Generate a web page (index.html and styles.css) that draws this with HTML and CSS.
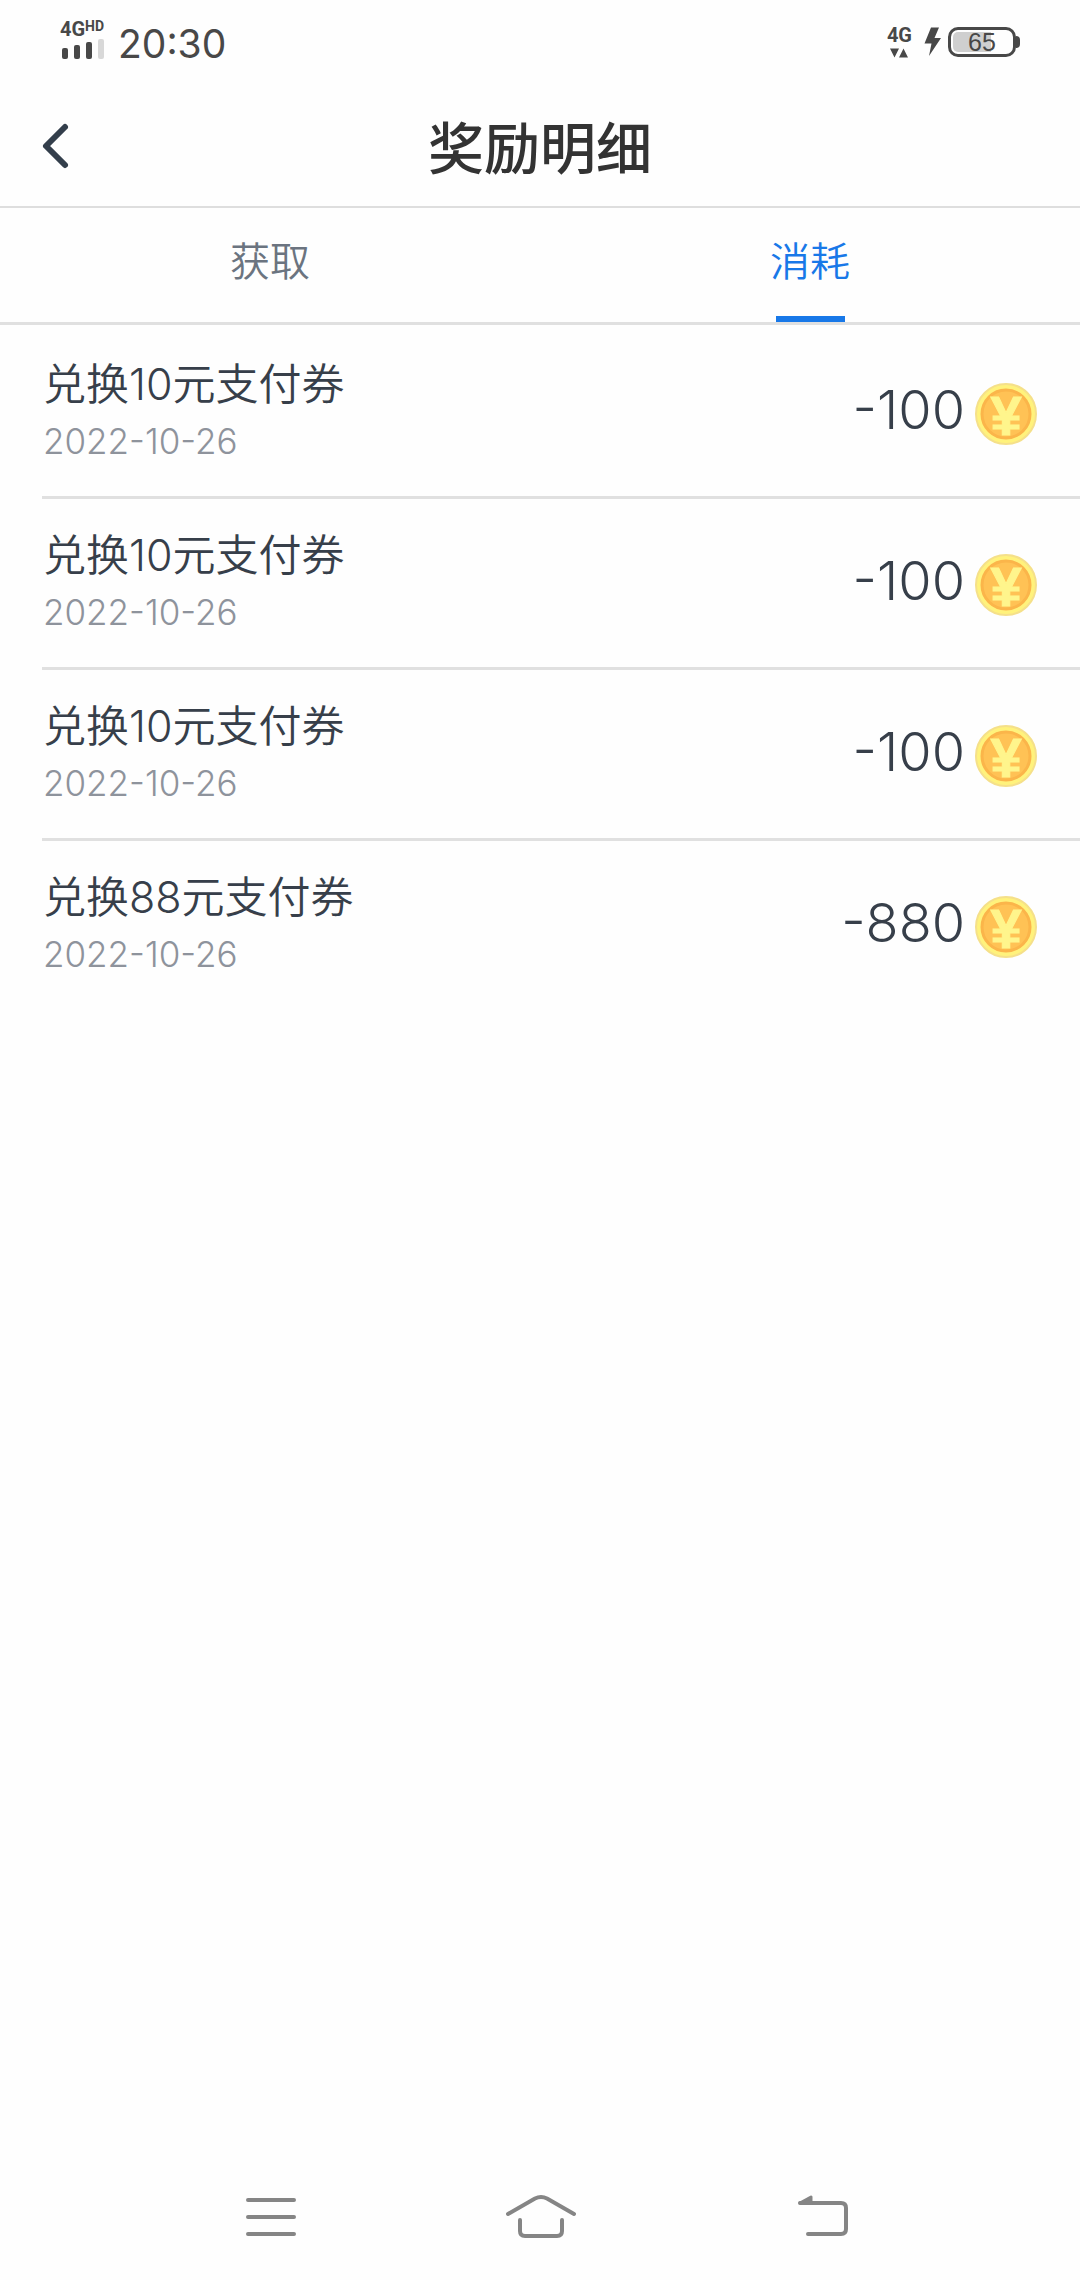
FILE: index.html
```html
<!DOCTYPE html>
<html lang="zh-CN">
<head>
  <meta charset="utf-8">
  <meta name="viewport" content="width=device-width, initial-scale=1">
  <title>奖励明细</title>
  <link rel="stylesheet" href="styles.css">
</head>
<body>
  <div class="status">
    <div class="status-group">
      <div class="signal">
        <span class="network">4G<sup class="hd">HD</sup></span>
        <svg width="44" height="20" viewBox="0 0 44 20" aria-hidden="true">
          <g fill="#484848">
            <rect x="1" y="9" width="6" height="11" rx="2"/>
            <rect x="13" y="6" width="6" height="14" rx="2"/>
            <rect x="25" y="3" width="6" height="17" rx="2"/>
          </g>
          <rect x="37" y="0" width="6" height="20" rx="2" fill="#d8d8d8"/>
        </svg>
      </div>
      <time class="clock">20:30</time>
    </div>
    <div class="status-group">
      <div class="data">
        <span class="network">4G</span>
        <svg width="18" height="10" viewBox="0 0 18 10" aria-hidden="true">
          <path d="M0 0.500h9l-4.500 9zM9 9.500h9l-4.500-9z" fill="#484848"/>
        </svg>
      </div>
      <svg class="bolt" width="18" height="30" viewBox="0 0 18 30" aria-hidden="true">
        <path d="M7 0.500h8l-4.500 10.500H17L5 29l2.500-12.500H0.500z" fill="#484848"/>
      </svg>
      <div class="battery"><span class="battery-level">65</span></div>
    </div>
  </div>

  <header class="header">
    <button class="back" type="button" aria-label="返回">
      <svg width="28" height="46" viewBox="0 0 28 46" aria-hidden="true">
        <path d="M23 3L4 22l19 19" fill="none" stroke="#333e4b" stroke-width="6" stroke-linecap="round" stroke-linejoin="round"/>
      </svg>
    </button>
    <h1 class="title">奖励明细</h1>
  </header>

  <nav class="tabs">
    <a class="tab" href="#earned">获取</a>
    <a class="tab tab-active" href="#spent" aria-current="page">消耗</a>
  </nav>

  <main class="main">
    <ul class="list">
      <li class="row">
        <div class="info"><span class="name">兑换10元支付券</span><time class="date">2022-10-26</time></div>
        <div class="amount">
          <span>-100</span>
          <svg class="coin" viewBox="0 0 64 64" aria-hidden="true">
            <circle class="coin-rim" cx="32" cy="32" r="30"/>
            <circle class="coin-face" cx="32" cy="32" r="24"/>
            <text class="coin-sign" x="32" y="53" text-anchor="middle">¥</text>
          </svg>
        </div>
      </li>
      <li class="row">
        <div class="info"><span class="name">兑换10元支付券</span><time class="date">2022-10-26</time></div>
        <div class="amount">
          <span>-100</span>
          <svg class="coin" viewBox="0 0 64 64" aria-hidden="true">
            <circle class="coin-rim" cx="32" cy="32" r="30"/>
            <circle class="coin-face" cx="32" cy="32" r="24"/>
            <text class="coin-sign" x="32" y="53" text-anchor="middle">¥</text>
          </svg>
        </div>
      </li>
      <li class="row">
        <div class="info"><span class="name">兑换10元支付券</span><time class="date">2022-10-26</time></div>
        <div class="amount">
          <span>-100</span>
          <svg class="coin" viewBox="0 0 64 64" aria-hidden="true">
            <circle class="coin-rim" cx="32" cy="32" r="30"/>
            <circle class="coin-face" cx="32" cy="32" r="24"/>
            <text class="coin-sign" x="32" y="53" text-anchor="middle">¥</text>
          </svg>
        </div>
      </li>
      <li class="row">
        <div class="info"><span class="name">兑换88元支付券</span><time class="date">2022-10-26</time></div>
        <div class="amount">
          <span>-880</span>
          <svg class="coin" viewBox="0 0 64 64" aria-hidden="true">
            <circle class="coin-rim" cx="32" cy="32" r="30"/>
            <circle class="coin-face" cx="32" cy="32" r="24"/>
            <text class="coin-sign" x="32" y="53" text-anchor="middle">¥</text>
          </svg>
        </div>
      </li>
    </ul>
  </main>

  <footer class="system">
    <button class="key" type="button" aria-label="菜单">
      <svg width="76" height="48" viewBox="0 0 76 48" aria-hidden="true"><path d="M15 7h46M15 24h46M15 41h46"/></svg>
    </button>
    <button class="key" type="button" aria-label="主页">
      <svg width="76" height="48" viewBox="0 0 76 48" aria-hidden="true"><path d="M6 21L33 5.500q6-3 12 0L72 21M18 27v11q0 5 5 5h32q5 0 5-5V27"/></svg>
    </button>
    <button class="key" type="button" aria-label="后退">
      <svg width="76" height="48" viewBox="0 0 76 48" aria-hidden="true"><path d="M37 41h33q5 0 5-5V15q0-5-5-5H29"/><path d="M29 10l11-6v6z" fill="#858585" stroke-width="3"/></svg>
    </button>
  </footer>
</body>
</html>
```
FILE: styles.css
```css
* {
  box-sizing: border-box;
}

body {
  display: flex;
  flex-direction: column;
  min-height: 100vh;
  margin: 0;
  background: #fefefe;
  color: #373f4a;
  font-family: Inter, "Noto Sans CJK SC", sans-serif;
  font-weight: 350;
}

button {
  padding: 0;
  border: 0;
  background: none;
}

svg {
  display: block;
  overflow: visible;
}

/* Status bar */
.status {
  display: flex;
  justify-content: space-between;
  height: 88px;
  padding: 0 60px;
  color: #484848;
}

.status-group {
  display: flex;
  align-items: flex-start;
}

.signal,
.data {
  display: flex;
  flex-direction: column;
}

.signal {
  width: 48px;
  padding-top: 19px;
}

.signal svg {
  margin-left: 1px;
}

.data {
  align-items: center;
  gap: 3px;
  padding-top: 25px;
}

.network {
  display: flex;
  font: 700 20px/20px Roboto, sans-serif;
}

.hd {
  font-size: 14px;
  line-height: 14px;
}

.clock {
  margin-left: 10px;
  padding-top: 20px;
  font-size: 39px;
  font-weight: 400;
  line-height: 48px;
}

.bolt {
  margin: 27px 6px 0 12px;
}

.battery {
  display: flex;
  align-items: center;
  margin-top: 27px;
}

.battery::after {
  width: 4px;
  height: 12px;
  border-radius: 0 6px 6px 0;
  background: #484848;
  content: "";
}

.battery-level {
  width: 68px;
  height: 30px;
  border: 3px solid #484848;
  border-radius: 10px;
  background: linear-gradient(90deg, #cfcfcf 65%, transparent 65%) content-box;
  padding: 2px;
  font: 400 25px/21px "Liberation Sans", sans-serif;
  text-align: center;
}

/* Page header */
.header {
  display: grid;
  grid-template-columns: 1fr auto 1fr;
  align-items: center;
  height: 120px;
  padding: 0 42px;
  border-bottom: 2px solid #dedede;
}

.back {
  justify-self: start;
}

.title {
  margin: 0;
  padding-top: 4px;
  color: #333;
  font-size: 56px;
  font-weight: 500;
  line-height: 80px;
}

/* Tabs */
.tabs {
  display: flex;
  height: 117px;
  border-bottom: 3px solid #e0e0e0;
}

.tab {
  display: flex;
  flex: 1;
  flex-direction: column;
  align-items: center;
  justify-content: space-between;
  padding-top: 24px;
  color: #6b7480;
  font-size: 40px;
  line-height: 60px;
  text-decoration: none;
}

.tab-active {
  color: #1878e8;
}

.tab-active::after {
  width: 69px;
  height: 6px;
  background: #1878e8;
  content: "";
}

/* Reward records */
.main {
  flex: 1;
}

.list {
  margin: 0;
  padding: 3px 0 0 42px;
  list-style: none;
}

.row {
  display: flex;
  align-items: flex-start;
  justify-content: space-between;
  height: 171px;
  padding-right: 42px;
  border-bottom: 3px solid #e0e0e0;
}

.row:last-child {
  border-bottom: 0;
}

.info {
  display: flex;
  flex-direction: column;
  padding: 26px 0 0 1px;
}

.name {
  font-size: 43px;
  line-height: 60px;
}

.date {
  color: #8e939c;
  font-size: 35px;
  font-weight: 300;
  line-height: 54px;
}

.amount {
  display: flex;
  align-items: center;
  gap: 9px;
  padding-top: 46px;
  font-size: 54px;
  font-weight: 300;
  line-height: 64px;
}

.coin {
  width: 64px;
  height: 64px;
  margin-top: 8px;
}

.coin-rim {
  fill: #fff27c;
  stroke: #f5e08a;
  stroke-width: 2px;
}

.coin-face {
  fill: #ffc255;
  stroke: #fbb54a;
  stroke-width: 3px;
}

.coin-sign {
  fill: #fff58c;
  stroke: #fff58c;
  stroke-width: 1px;
  font: 700 56px "Liberation Sans", sans-serif;
}

/* System navigation */
.system {
  display: flex;
  justify-content: space-around;
  height: 126px;
  padding: 0 136px;
}

.key svg {
  fill: none;
  stroke: #858585;
  stroke-width: 4;
  stroke-linecap: round;
  stroke-linejoin: round;
}
```
